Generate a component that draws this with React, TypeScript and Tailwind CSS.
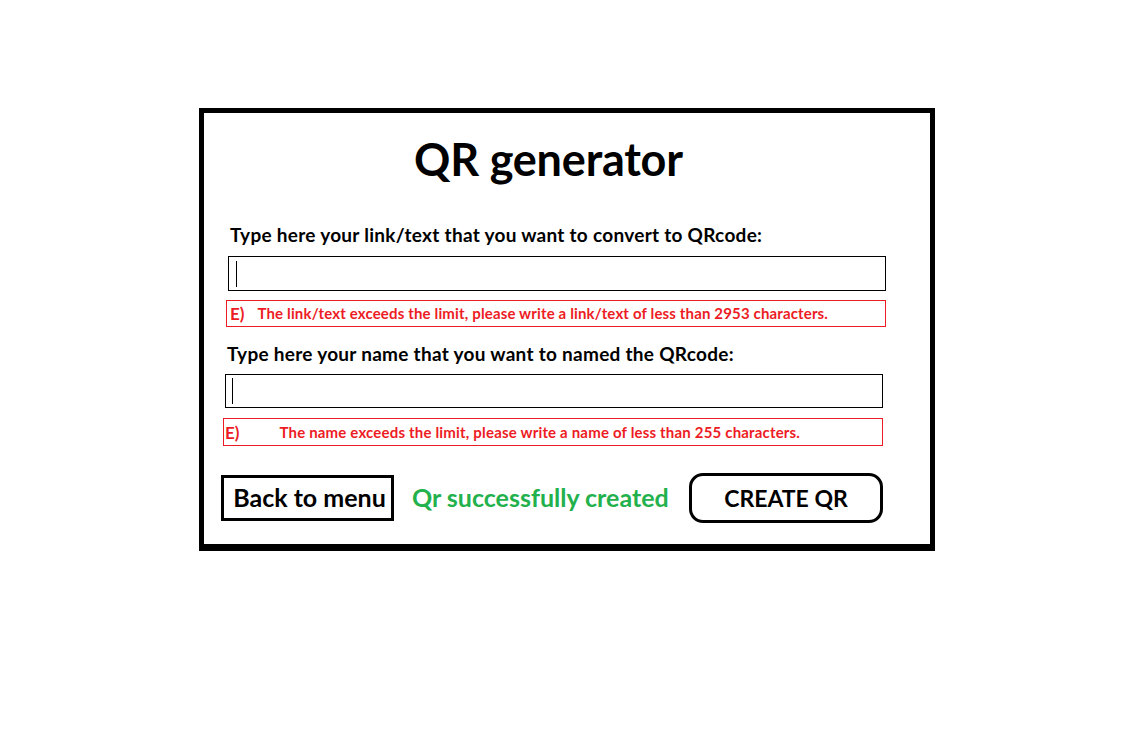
import React from "react";

export default function App() {
  const font = { fontFamily: "Lato, 'Open Sans', sans-serif" };
  return (
    <div className="w-[1126px] h-[744px] bg-white overflow-hidden" style={font}>
      <div className="ml-[199px] mt-[108px] w-[736px] h-[443px] border-[5px] border-black border-b-[7px] bg-white flex flex-col">
        <h1 className="ml-[210px] mt-[24px] h-[44px] leading-[44px] text-[45px] font-bold text-black tracking-[-0.2px]">
          QR generator
        </h1>
        <label className="ml-[26px] mt-[44px] h-[20px] leading-[20px] text-[19px] font-bold text-black tracking-[0.28px]">
          Type here your link/text that you want to convert to QRcode:
        </label>
        <div className="ml-[24px] mt-[11px] w-[658px] h-[35px] border border-black flex items-center pl-[7px]">
          <span className="block w-px h-[26px] bg-black" />
        </div>
        <div className="ml-[22px] mt-[9px] w-[660px] h-[27px] border border-[#ed1c24] flex items-center text-[#ed1c24] font-bold">
          <span className="ml-[3px] text-[17px] leading-none">E)</span>
          <span className="ml-[13px] text-[15px] leading-none tracking-[0.15px]">
            The link/text exceeds the limit, please write a link/text of less than 2953 characters.
          </span>
        </div>
        <label className="ml-[23px] mt-[17px] h-[20px] leading-[20px] text-[19px] font-bold text-black tracking-[0.28px]">
          Type here your name that you want to named the QRcode:
        </label>
        <div className="ml-[21px] mt-[10px] w-[658px] h-[34px] border border-black flex items-center pl-[6px]">
          <span className="block w-px h-[26px] bg-black" />
        </div>
        <div className="ml-[19px] mt-[10px] w-[660px] h-[28px] border border-[#ed1c24] flex items-center text-[#ed1c24] font-bold">
          <span className="ml-[1px] text-[17px] leading-none">E)</span>
          <span className="ml-[40px] text-[15px] leading-none tracking-[0.18px]">
            The name exceeds the limit, please write a name of less than 255 characters.
          </span>
        </div>
        <div className="mt-[27px] flex items-center">
          <button className="ml-[17px] w-[173px] h-[46px] border-[3px] border-black flex items-center justify-center pl-[4px] text-[25px] font-bold text-black">
            Back to menu
          </button>
          <span className="ml-[18px] text-[25px] font-bold text-[#22b14c]">
            Qr successfully created
          </span>
          <button className="ml-auto mr-[47px] w-[194px] h-[50px] border-[3px] border-black rounded-[14px] flex items-center justify-center text-[23px] font-bold text-black">
            CREATE QR
          </button>
        </div>
      </div>
    </div>
  );
}
